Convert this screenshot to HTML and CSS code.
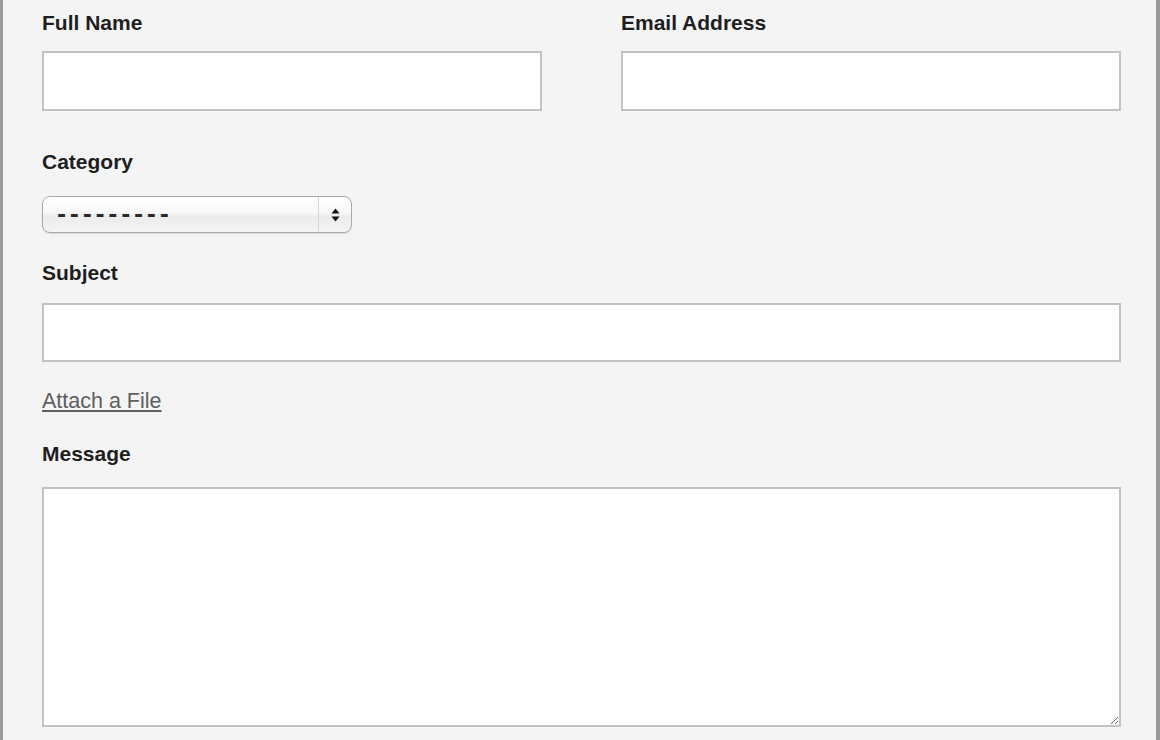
FILE: index.html
```html
<!DOCTYPE html>
<html lang="en">
<head>
<meta charset="utf-8">
<title>Contact form</title>
<link rel="stylesheet" href="styles.css">
</head>
<body>
<div class="frame">
  <form class="form">
    <div class="row">
      <div class="field">
        <label class="label" for="name">Full Name</label>
        <input class="text" id="name" type="text">
      </div>
      <div class="field">
        <label class="label" for="email">Email Address</label>
        <input class="text" id="email" type="text">
      </div>
    </div>

    <div class="field field-category">
      <label class="label" for="cat">Category</label>
      <div class="select-wrap">
        <select class="select" id="cat">
          <option>---------</option>
        </select>
        <span class="select-arrows">
          <svg width="9" height="14" viewBox="0 0 9 14"><path d="M4.5 0.5 L8.5 5.5 L0.5 5.5 Z" fill="#111"/><path d="M0.5 8.5 L8.5 8.5 L4.5 13.5 Z" fill="#111"/></svg>
        </span>
      </div>
    </div>

    <div class="field field-subject">
      <label class="label" for="subj">Subject</label>
      <input class="text" id="subj" type="text">
    </div>

    <a class="attach" href="#">Attach a File</a>

    <div class="field field-message">
      <label class="label" for="msg">Message</label>
      <textarea class="area" id="msg"></textarea>
    </div>
  </form>
</div>
</body>
</html>
```

FILE: styles.css
```css
html, body {
  margin: 0;
  padding: 0;
  height: 100%;
}

body {
  background: #f4f4f4;
  font-family: "Liberation Sans", Arial, Helvetica, sans-serif;
  color: #222;
}

.frame {
  box-sizing: border-box;
  min-height: 740px;
  border-left: 3px solid #9a9a9a;
  border-right: 4px solid #9a9a9a;
  padding: 13px 35px 0 39px;
}

.form {
  display: flex;
  flex-direction: column;
}

.row {
  display: grid;
  grid-template-columns: 500px 500px;
  column-gap: 79px;
}

.field {
  display: flex;
  flex-direction: column;
}

.label {
  font-weight: bold;
  font-size: 21px;
  line-height: 20px;
  color: #1e1e1e;
  margin-bottom: 18px;
}

.text {
  box-sizing: border-box;
  height: 60px;
  width: 100%;
  margin: 0;
  border: 2px solid #c2c2c2;
  background: #fff;
  border-radius: 0;
  outline: none;
  font-size: 18px;
  padding: 0 8px;
}

.field-category {
  margin-top: 41px;
}

.field-category .label {
  margin-bottom: 24px;
}

.select-wrap {
  position: relative;
  width: 310px;
  height: 37px;
}

.select {
  -webkit-appearance: none;
  appearance: none;
  box-sizing: border-box;
  width: 310px;
  height: 37px;
  margin: 0;
  border: 1px solid #a9a9a9;
  border-radius: 8px;
  background: linear-gradient(#ffffff 0%, #f7f7f7 45%, #ebebeb 55%, #f4f4f4 100%);
  box-shadow: 0 1px 1px rgba(0,0,0,0.12);
  font-family: "DejaVu Sans", "Liberation Sans", sans-serif;
  font-size: 22px;
  font-weight: bold;
  color: #2a2a2a;
  padding: 0 0 0 14px;
  letter-spacing: 3.7px;
  outline: none;
}

.select-arrows {
  position: absolute;
  top: 1px;
  right: 1px;
  bottom: 1px;
  width: 32px;
  border-left: 1px solid #d6d6d6;
  display: flex;
  align-items: center;
  justify-content: center;
  pointer-events: none;
}

.field-subject {
  margin-top: 30px;
}

.field-subject .label {
  margin-bottom: 20px;
}

.field-subject .text {
  height: 59px;
}

.attach {
  align-self: flex-start;
  margin-top: 28px;
  font-size: 21.5px;
  line-height: 22px;
  color: #5e5e5e;
  text-decoration: underline;
  text-underline-offset: 2px;
}

.field-message {
  margin-top: 32px;
}

.field-message .label {
  margin-bottom: 23px;
}

.area {
  box-sizing: border-box;
  width: 100%;
  height: 240px;
  margin: 0;
  border: 2px solid #c2c2c2;
  background: #fff;
  border-radius: 0;
  outline: none;
  resize: vertical;
  font-family: "Liberation Sans", Arial, sans-serif;
  font-size: 18px;
  padding: 8px;
}
```
